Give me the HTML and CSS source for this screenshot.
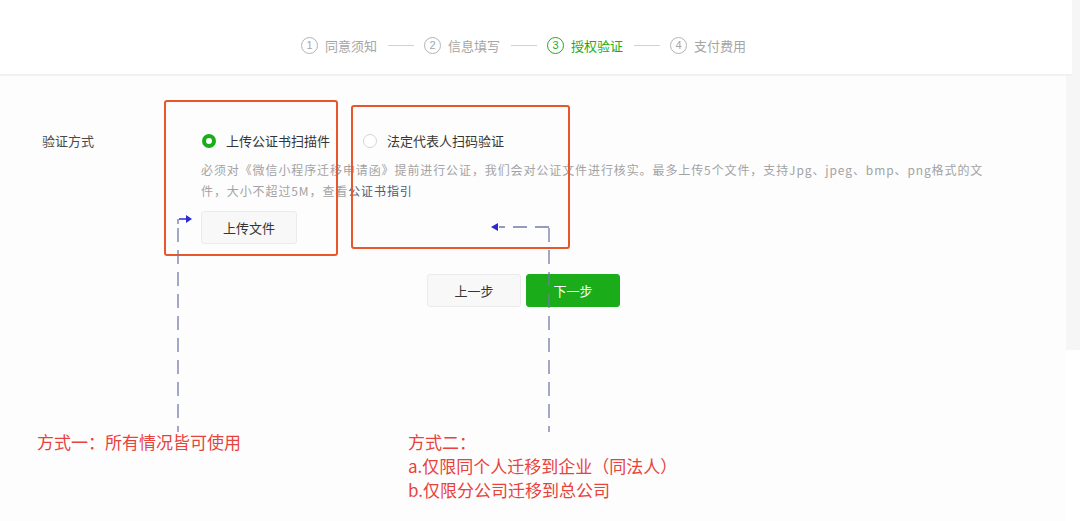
FILE: index.html
```html
<!DOCTYPE html>
<html lang="zh-CN">
<head>
    <meta charset="UTF-8">
    <title>授权验证</title>
    <link rel="stylesheet" href="styles.css">
</head>
<body>
    <div class="page">
        <div class="main">
            <header class="steps">
                <div class="step"><span class="num">1</span><span>同意须知</span></div>
                <span class="step-line"></span>
                <div class="step"><span class="num">2</span><span>信息填写</span></div>
                <span class="step-line"></span>
                <div class="step active"><span class="num">3</span><span>授权验证</span></div>
                <span class="step-line"></span>
                <div class="step"><span class="num">4</span><span>支付费用</span></div>
            </header>

            <section class="content">
                <div class="form-row">
                    <div class="form-label">验证方式</div>
                    <div class="form-body">
                        <div class="options">
                            <label class="option checked"><span class="radio"></span>上传公证书扫描件</label>
                            <label class="option"><span class="radio"></span>法定代表人扫码验证</label>
                        </div>
                        <p class="desc">必须对《微信小程序迁移申请函》提前进行公证，我们会对公证文件进行核实。最多上传5个文件，支持Jpg、jpeg、bmp、png格式的文件，大小不超过5M，查看<a href="#">公证书指引</a></p>
                        <button type="button" class="btn upload">上传文件</button>
                    </div>
                </div>

                <div class="actions">
                    <button type="button" class="btn">上一步</button>
                    <button type="button" class="btn primary">下一步</button>
                </div>

                <div class="notes">
                    <p class="note note-one">方式一：所有情况皆可使用</p>
                    <p class="note note-two">方式二：<br>a.仅限同个人迁移到企业（同法人）<br>b.仅限分公司迁移到总公司</p>
                </div>
            </section>

            <!-- annotation overlay -->
            <div class="mark mark-one"></div>
            <div class="mark mark-two"></div>
            <svg class="arrows" width="1080" height="521" viewBox="0 0 1080 521">
                <g stroke="#7379ab" stroke-width="1.3" fill="none" stroke-dasharray="14 8">
                    <path d="M178 228 V432"/>
                    <path d="M549 228 V432"/>
                    <path d="M549 227 H499"/>
                </g>
                <path d="M179 219 H186" stroke="#2a2ad0" stroke-width="1.5" fill="none"/>
                <path d="M186 215 L192 219 L186 223 Z" fill="#2a2ad0"/>
                <path d="M498 223 L491 227 L498 231 Z" fill="#2a2ad0"/>
                <path d="M178 219 V224" stroke="#7379ab" stroke-width="1.3"/>
            </svg>
        </div>
        <div class="scroll-strip"></div>
    </div>
</body>
</html>
```

FILE: styles.css
```css
body {
    margin: 0;
    font-family: "Noto Sans CJK SC", "Liberation Sans", sans-serif;
    background-color: #fff;
    color: #353535;
}
.page {
    display: flex;
    width: 1080px;
    height: 521px;
    overflow: hidden;
}
.main {
    position: relative;
    width: 1066px;
    background-color: #fdfdfd;
}
.scroll-strip {
    width: 14px;
    height: 350px;
    background-color: #f6f6f6;
}

.steps {
    display: flex;
    align-items: center;
    height: 76px;
    padding-top: 17px;
    padding-left: 301px;
    box-sizing: border-box;
    background-color: #fff;
    border-bottom: 2px solid #f1f1f1;
    font-size: 13px;
    color: #a6a6a6;
    margin-right: -6px;
}
.step {
    display: flex;
    align-items: center;
    gap: 7px;
}
.step .num {
    width: 15px;
    height: 15px;
    border: 1px solid #b3b3b3;
    border-radius: 50%;
    font-size: 11px;
    line-height: 15px;
    text-align: center;
    font-family: "Liberation Sans", sans-serif;
}
.step.active {
    color: #1aad19;
}
.step.active .num {
    border-color: #1aad19;
}
.step-line {
    width: 26px;
    height: 1px;
    background-color: #d2d2d2;
    margin: 0 10px 0 11px;
}

.content {
    padding-top: 55px;
}
.form-row {
    display: flex;
    padding-left: 42px;
}
.form-label {
    width: 159px;
    font-size: 13px;
    line-height: 20px;
    color: #4a4a4a;
}
.options {
    display: flex;
    gap: 33px;
    height: 20px;
}
.option {
    display: flex;
    align-items: center;
    gap: 10px;
    font-size: 13px;
    line-height: 20px;
    color: #353535;
}
.radio {
    width: 14px;
    height: 14px;
    border: 1px solid #d5d5d5;
    border-radius: 50%;
    box-sizing: border-box;
    background: #fff;
}
.option.checked .radio {
    border: 4px solid #1aad19;
    margin-left: 1px;
}
.desc {
    width: 800px;
    margin: 8px 0 10px;
    font-size: 12px;
    line-height: 21px;
    letter-spacing: 0.9px;
    color: #a3a3a3;
}
.desc a {
    color: #4d5a78;
    text-decoration: none;
}
.btn {
    height: 33px;
    padding: 0;
    border: 1px solid #ebebeb;
    border-radius: 3px;
    background-color: #f8f8f8;
    font-family: inherit;
    font-size: 13px;
    color: #353535;
}
.upload {
    width: 96px;
}
.actions {
    display: flex;
    gap: 5px;
    margin: 30px 0 0 427px;
}
.actions .btn {
    width: 94px;
}
.btn.primary {
    border-color: #1aad19;
    background-color: #1aad19;
    color: #fff;
}

.notes {
    display: flex;
    margin-top: 123px;
    padding-left: 37px;
}
.note {
    margin: 0;
    font-size: 17px;
    line-height: 24px;
    color: #e8423c;
}
.note-one {
    width: 371px;
}

.mark {
    position: absolute;
    border: 2px solid #e8562c;
    border-radius: 3px;
    box-sizing: border-box;
}
.mark-one {
    left: 164px;
    top: 100px;
    width: 174px;
    height: 156px;
}
.mark-two {
    left: 351px;
    top: 105px;
    width: 219px;
    height: 144px;
}
.arrows {
    position: absolute;
    left: 0;
    top: 0;
}
```
